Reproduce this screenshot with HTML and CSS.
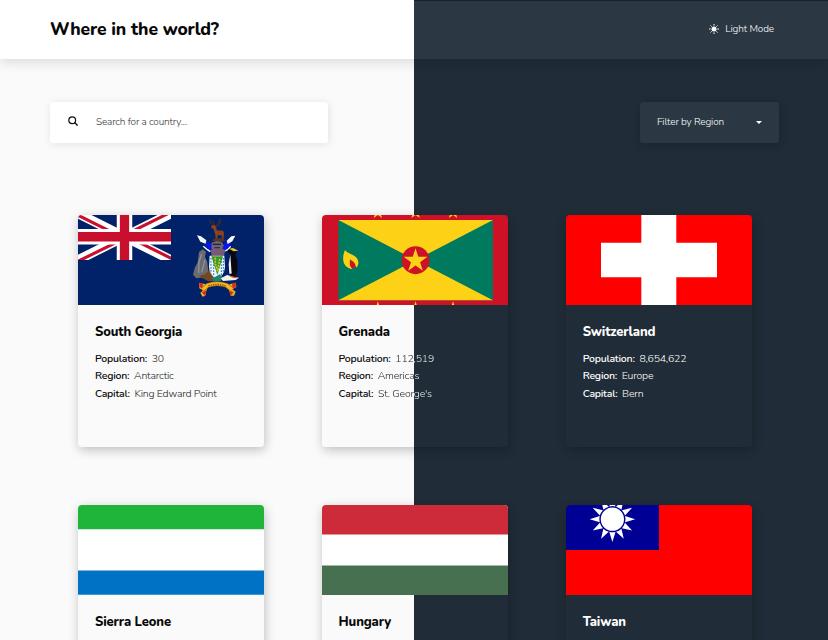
FILE: index.html
```html
<!DOCTYPE html>
<html lang="en">
<head>
<meta charset="utf-8">
<title>Where in the world?</title>
<link rel="stylesheet" href="styles.css">
</head>
<body>
<header class="header">
  <h1 class="brand">Where in the world?</h1>
  <button class="mode">
    <svg class="mode-icon" viewBox="0 0 10 10"><circle cx="5" cy="5" r="2.5" fill="#fff"/><path d="M5 0v1.6M5 8.4V10M0 5h1.6M8.4 5H10M1.5 1.5l1.1 1.1M7.4 7.4l1.1 1.1M1.5 8.5l1.1-1.1M7.4 2.6l1.1-1.1" stroke="#fff" stroke-width="1"/></svg>
    <span>Light Mode</span>
  </button>
</header>
<main>
  <div class="controls">
    <div class="search">
      <svg class="search-icon" viewBox="0 0 10 10" fill="none" stroke="#111"><circle cx="4.2" cy="4.2" r="3.400" stroke-width="1.200"/><path d="M6.600 6.600l3 3" stroke-width="1.400"/></svg>
      <span class="search-text">Search for a country...</span>
    </div>
    <div class="filter"><span>Filter by Region</span><i class="caret"></i></div>
  </div>
  <div class="grid">
    <article class="card light">
      <svg class="flag" viewBox="0 0 186 90" preserveAspectRatio="none">
        <rect width="186" height="90" fill="#012169"/>
        <svg x="0" y="0" width="93" height="45" viewBox="0 1 60 29" preserveAspectRatio="none">
          <path d="M0 0l60 30M60 0L0 30" stroke="#fff" stroke-width="6"/>
          <path d="M-.5 .9L30 16M60.5 29.1L30 14M60.5-1.1L30 14M-.5 31.1L30 16" stroke="#c8102e" stroke-width="2"/>
          <path d="M30 0v30M0 15h60" stroke="#fff" stroke-width="10"/>
          <path d="M30 0v30M0 15h60" stroke="#c8102e" stroke-width="6"/>
        </svg>
        <g transform="translate(107 0) scale(.33333)">
          <path d="M73 14l7 16 8 4-5-19M104 10l-2 12-10 11 9-1 8-17" fill="none" stroke="#4a3118" stroke-width="3"/>
          <path d="M80 32l8-3 6 7 1 10 19 1 3 7-2 22h-4l-1-15-12 0-2 16h-4l-1-18-6-18-7-2z" fill="#8a421b"/>
          <path d="M80 76l12-6 24 0 4 8-22 4z" fill="#593525"/>
          <path d="M56 80l16 1 9 10 5 17-13-2-9-11zM138 80l-16 0-8 14-1 12 14 0 9-12z" fill="#0717e8"/>
          <path d="M36 61l12 3 16 12-2 10-16-6zM151 62l-12 2-14 13 3 10 14-8z" fill="#f4f6fb"/>
          <path d="M55 94l12 10 9 6M137 94l-9 10-8 4" stroke="#fff" stroke-width="4" fill="none"/>
          <path d="M80 83l14-5 17 4 5 9-8 20-17 3-12-15z" fill="#6d6472"/>
          <path d="M84 88h24M88 99h17" stroke="#221c4a" stroke-width="4"/>
          <path d="M77 105l10-5 24 0 10 6-4 16H80z" fill="#765b73"/>
          <path d="M42 111l11-8 10 7-3 15 7 17 3 29-7 16-29 3-10-11 5-20 9-17z" fill="#696b70"/>
          <path d="M50 118l-8 22-1 34M60 135l-10 37" stroke="#929397" stroke-width="4" fill="none"/>
          <path d="M42 184l20-8 12-13 10 17 8 19H70z" fill="#744621"/>
          <path d="M74 122h44l2 34q-2 25-23 37-24-12-25-38z" fill="#ecf6ff"/>
          <path d="M78 129v46M115 129v45M86 130v51M109 130v50" stroke="#176bab" stroke-width="3" stroke-dasharray="5 4"/>
          <path d="M79 124h35l-17 56z" fill="#36952c"/>
          <path d="M91 128v18l7 22 6-36" fill="none" stroke="#d8c91b" stroke-width="5" stroke-dasharray="6 3"/>
          <path d="M80 186l10 0 14-8 12 11-10 10-21 0z" fill="#198574"/>
          <path d="M128 105l15-6 12 8-4 13 6 18 0 32-9 20-17-16 2-28 6-25-9-7z" fill="#08080d"/>
          <path d="M136 120l-5 27 2 29 7 0-2-29z" fill="#eee"/>
          <path d="M132 101l12-2 16 8-14 2z" fill="#e4cc2b"/>
          <path d="M108 190l18-10 23 6 12 3-9 6-38 3z" fill="#f6f1e8"/>
          <path d="M135 184l12 4 14 0" stroke="#e46b27" stroke-width="3"/>
          <path d="M42 204l18 3 10 4-7 20-2 11-8 3-7-11 8-8-11-6zM153 204l-17 3-10 6 8 18 3 11 10 0 5-12-10-7 12-7z" fill="#f2b21f"/>
          <path d="M43 202l11 5-2 13-9-4zM152 202l-11 6 2 12 10-3zM50 232l15-6-5 17zM146 231l-14-4 6 15z" fill="#d92a20"/>
          <path d="M53 224l15-13q28-10 57 0l16 13" fill="none" stroke="#9c5b10" stroke-width="14"/>
          <path d="M53 224l15-13q28-10 57 0l16 13" fill="none" stroke="#f6b71e" stroke-width="10"/>
          <path d="M70 212q26-8 53 1" fill="none" stroke="#80520e" stroke-width="4" stroke-dasharray="4 3"/>
        </g>
      </svg>
      <div class="info"><h2>South Georgia</h2>
        <p><b>Population:</b><span>30</span></p><p><b>Region:</b><span>Antarctic</span></p><p><b>Capital:</b><span>King Edward Point</span></p></div>
    </article>
    <article class="card split">
      <svg class="flag" viewBox="0 0 187 90" preserveAspectRatio="none">
        <defs><path id="star" d="M0-10L2.25-3.1H9.51L3.64 1.18 5.88 8.09 0 3.82-5.88 8.09-3.64 1.18-9.51-3.1H-2.25Z"/></defs>
        <rect width="187" height="90" fill="#ce1126"/>
        <path d="M16.400 5h155v80.300h-155z" fill="#007a5e"/>
        <path d="M16.400 5h155l-155 80.300h155z" fill="#fcd116"/>
        <circle cx="93.800" cy="45.200" r="14" fill="#ce1126"/>
        <g fill="#fcd116">
          <use href="#star" transform="translate(93.800 45.700) scale(1.25)"/>
          <use href="#star" transform="translate(56 -2.800) scale(.72)"/><use href="#star" transform="translate(93.800 -2.800) scale(.72)"/><use href="#star" transform="translate(131.400 -2.800) scale(.72)"/>
          <use href="#star" transform="translate(56 93.500) scale(.72)"/><use href="#star" transform="translate(93.800 93.500) scale(.72)"/><use href="#star" transform="translate(131.400 93.500) scale(.72)"/>
          <path d="M23 35c1 2 4 3 8 5 4 2 6 5 5.300 9q-.3 2-1.800 3.500-5-5-6-8.500-2 4 2 10.300-6-1-8.500-6-2-6 1-13.300z"/>
        </g>
        <path d="M28.500 45c3 1 5 3 5.500 7.500q-3-1-3.500 1.500-4-4-2-9z" fill="#ce1126"/>
      </svg>
      <div class="info"><h2>Grenada</h2>
        <p><b>Population:</b><span>112,519</span></p><p><b>Region:</b><span>Americas</span></p><p><b>Capital:</b><span>St. George's</span></p></div>
    </article>
    <article class="card dark">
      <svg class="flag" viewBox="0 0 186 90" preserveAspectRatio="none"><rect width="186" height="90" fill="#f00"/><path d="M75.300 0h35v90h-35zM35 27.700h116v34.600H35z" fill="#fff"/></svg>
      <div class="info"><h2>Switzerland</h2>
        <p><b>Population:</b><span>8,654,622</span></p><p><b>Region:</b><span>Europe</span></p><p><b>Capital:</b><span>Bern</span></p></div>
    </article>
    <article class="card light">
      <svg class="flag" viewBox="0 0 186 90" preserveAspectRatio="none"><rect width="186" height="90" fill="#fff"/><path d="M0 0h186v24.300H0z" fill="#1eb53a"/><path d="M0 65.400h186v24.300H0z" fill="#0072c6"/></svg>
      <div class="info"><h2>Sierra Leone</h2></div>
    </article>
    <article class="card split">
      <svg class="flag" viewBox="0 0 187 90" preserveAspectRatio="none"><rect width="187" height="90" fill="#fff"/><path d="M0 0h187v29.400H0z" fill="#cd2a3a"/><path d="M0 60.400h187v29.600H0z" fill="#477050"/></svg>
      <div class="info"><h2>Hungary</h2></div>
    </article>
    <article class="card dark">
      <svg class="flag" viewBox="0 0 186 90" preserveAspectRatio="none">
        <rect width="186" height="90" fill="#f00"/><rect width="93" height="45" fill="#000095"/>
        <g transform="translate(46.400 14.200)" fill="#fff">
          <g id="rays"><path id="ray" d="M0 22.700L-3.100 12.700Q0 13.500 3.100 12.700Z"/><use href="#ray" transform="rotate(30)"/><use href="#ray" transform="rotate(60)"/></g>
          <use href="#rays" transform="rotate(90)"/><use href="#rays" transform="rotate(180)"/><use href="#rays" transform="rotate(270)"/>
          <circle r="11.600"/>
        </g>
      </svg>
      <div class="info"><h2>Taiwan</h2></div>
    </article>
  </div>
</main>
</body>
</html>
```
FILE: styles.css
```css
* { box-sizing: border-box; }
html { height: 100%; overflow: hidden; }
body {
  margin: 0;
  height: 640px;
  overflow: hidden;
  font-family: Nunito, Lato, sans-serif;
  font-size: 10px;
  color: #080808;
  background: linear-gradient(to right, #fafafa 414px, #202c37 414px);
}
.header {
  height: 59px;
  padding: 0 54px 1px 50px;
  display: flex;
  align-items: center;
  justify-content: space-between;
  background:
    linear-gradient(#1b1f2e, #1b1f2e) 414px 0 / 414px 1px no-repeat,
    linear-gradient(to right, #fff 414px, #2b3844 414px);
  box-shadow: 0 3px 12px rgba(0, 0, 0, .13);
}
.brand {
  margin: 0;
  font-size: 17.5px;
  line-height: 24px;
  font-weight: 800;
  letter-spacing: -.12px;
}
.mode {
  display: flex;
  align-items: center;
  gap: 6px;
  padding: 0;
  border: 0;
  background: none;
  color: #fff;
  font: 300 10px/14px Nunito, Lato, sans-serif;
  letter-spacing: -.1px;
}
.mode-icon { width: 10px; height: 10px; }
.controls {
  display: flex;
  justify-content: space-between;
  padding: 43px 49px 0 50px;
}
.search, .filter {
  height: 41px;
  padding-bottom: 1px;
  display: flex;
  align-items: center;
  border-radius: 3px;
  font-weight: 300;
  letter-spacing: -.14px;
}
.search {
  width: 278px;
  padding-left: 18px;
  gap: 18px;
  background: #fff;
  box-shadow: 1px 1px 8px rgba(0, 0, 0, .1);
}
.search-icon { width: 10px; height: 10px; margin-top: -2px; }
.search-text { color: #333; }
.filter {
  width: 139px;
  padding-left: 17px;
  padding-right: 17px;
  justify-content: space-between;
  color: #fff;
  background: #2b3844;
  box-shadow: 1px 2px 9px rgba(0, 0, 0, .2);
}
.caret {
  border: 3px solid transparent;
  border-top-color: #fff;
  border-bottom: 0;
}
.grid {
  display: grid;
  grid-template-columns: 186px 186.5px 186px;
  column-gap: 57.6px;
  row-gap: 58px;
  padding: 72px 76px 0 78px;
}
.card {
  height: 232px;
  border-radius: 4px;
  overflow: hidden;
  box-shadow: 1px 3px 11px rgba(0, 0, 0, .24);
}
.light { background: #fafafa; }
.dark { background: #202c37; color: #fff; }
.split { background: linear-gradient(to right, #fafafa 414px, #202c37 414px) fixed; }
.flag { display: block; width: 100%; height: 90px; }
.info { padding: 17.5px 17px 0; }
.info h2 {
  margin: 0 0 9px;
  font-size: 13px;
  line-height: 18px;
  font-weight: 800;
  letter-spacing: -.13px;
}
.info p { margin: 0; line-height: 17.8px; font-size: 10.5px; white-space: nowrap; }
.info b { font-weight: 600; letter-spacing: -.22px; margin-right: 4.7px; }
.info span { font-weight: 300; letter-spacing: -.2px; }
.light .info span { color: #222; }
.split .info span {
  color: transparent;
  background: linear-gradient(to right, #222 414px, #fff 414px) fixed;
  -webkit-background-clip: text;
  background-clip: text;
}
```
